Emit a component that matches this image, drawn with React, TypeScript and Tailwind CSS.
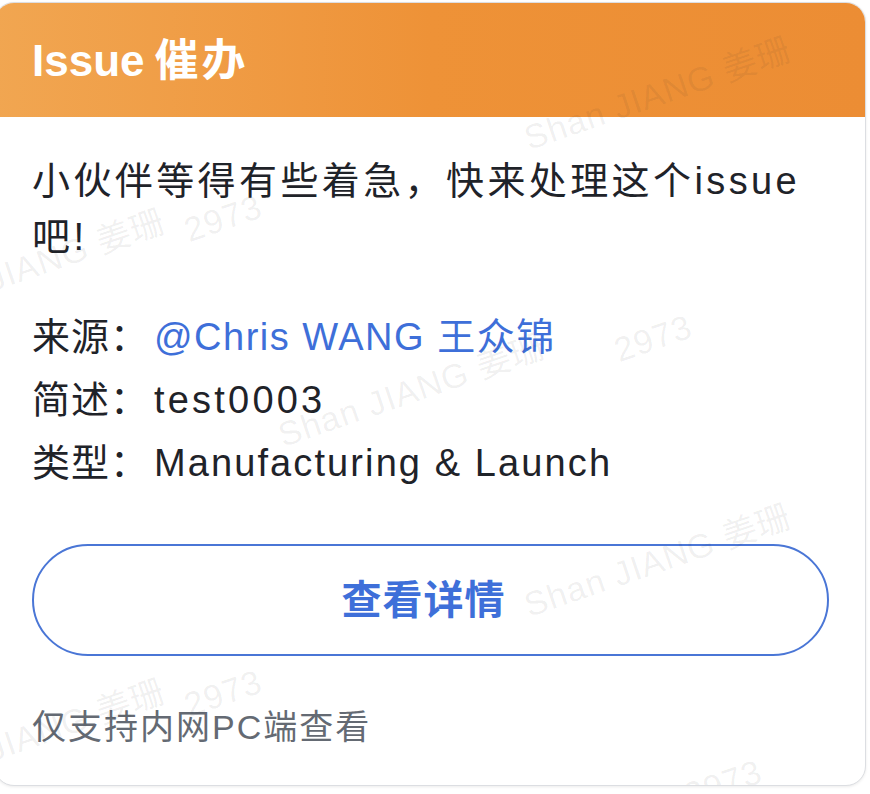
import React from "react";

const font = '"Liberation Sans", "Noto Sans CJK SC", sans-serif';

function Watermark({ left, top, text }: { left: number; top: number; text: string }) {
  return (
    <div
      className="absolute whitespace-nowrap text-[34px] leading-none tracking-[1px] text-[rgba(31,35,41,0.07)] origin-bottom-left -rotate-[19deg] pointer-events-none"
      style={{ left, top }}
    >
      {text}
    </div>
  );
}

export default function App() {
  return (
    <div className="w-[870px] h-[794px] overflow-hidden bg-white" style={{ fontFamily: font }}>
      <div className="relative ml-[-6px] mt-[2px] w-[872px] h-[784px] rounded-[20px] border border-[#dcdee2] bg-white overflow-hidden shadow-[0_1px_3px_rgba(0,0,0,0.08)]">
        <div className="h-[114px] bg-gradient-to-r from-[#f1a651] via-[#ee9237] to-[#ec8d34] pl-[37px] flex items-center">
          <span className="text-white font-bold text-[44px] leading-none mt-[2px]">
            Issue<span className="ml-[10px] tracking-[3px]">催办</span>
          </span>
        </div>
        <div className="pl-[37px] pr-[36px] pt-[36px]">
          <p className="text-[38px] leading-[56px] text-[#1f2329] tracking-[3.4px]">
            小伙伴等得有些着急，快来处理这个issue
            <br />
            吧!
          </p>
          <div className="mt-[41px] text-[38px] leading-[63px] text-[#1f2329]">
            <div className="flex">
              <span className="w-[122px] tracking-[1px]">来源：</span>
              <span className="text-[#3e6fd9] tracking-[1.5px]">@Chris WANG 王众锦</span>
            </div>
            <div className="flex">
              <span className="w-[122px] tracking-[1px]">简述：</span>
              <span className="tracking-[3.2px]">test0003</span>
            </div>
            <div className="flex">
              <span className="w-[122px] tracking-[1px]">类型：</span>
              <span className="tracking-[2.1px]">Manufacturing &amp; Launch</span>
            </div>
          </div>
          <div className="mt-[49px] h-[112px] rounded-full border-[2px] border-[#4a76d6] flex items-center justify-center">
            <span className="text-[#3e6fd9] text-[40px] font-bold tracking-[1px] ml-[-14px]">查看详情</span>
          </div>
          <p className="mt-[51px] text-[34px] leading-[40px] text-[#646a73] tracking-[2px]">仅支持内网PC端查看</p>
        </div>
        <Watermark left={536} top={118} text="Shan JIANG 姜珊" />
        <Watermark left={-90} top={290} text="Shan JIANG 姜珊" />
        <Watermark left={196} top={210} text="2973" />
        <Watermark left={626} top={330} text="2973" />
        <Watermark left={290} top={415} text="Shan JIANG 姜珊" />
        <Watermark left={536} top={585} text="Shan JIANG 姜珊" />
        <Watermark left={196} top={685} text="2973" />
        <Watermark left={-90} top={760} text="Shan JIANG 姜珊" />
        <Watermark left={696} top={775} text="2973" />
      </div>
    </div>
  );
}
